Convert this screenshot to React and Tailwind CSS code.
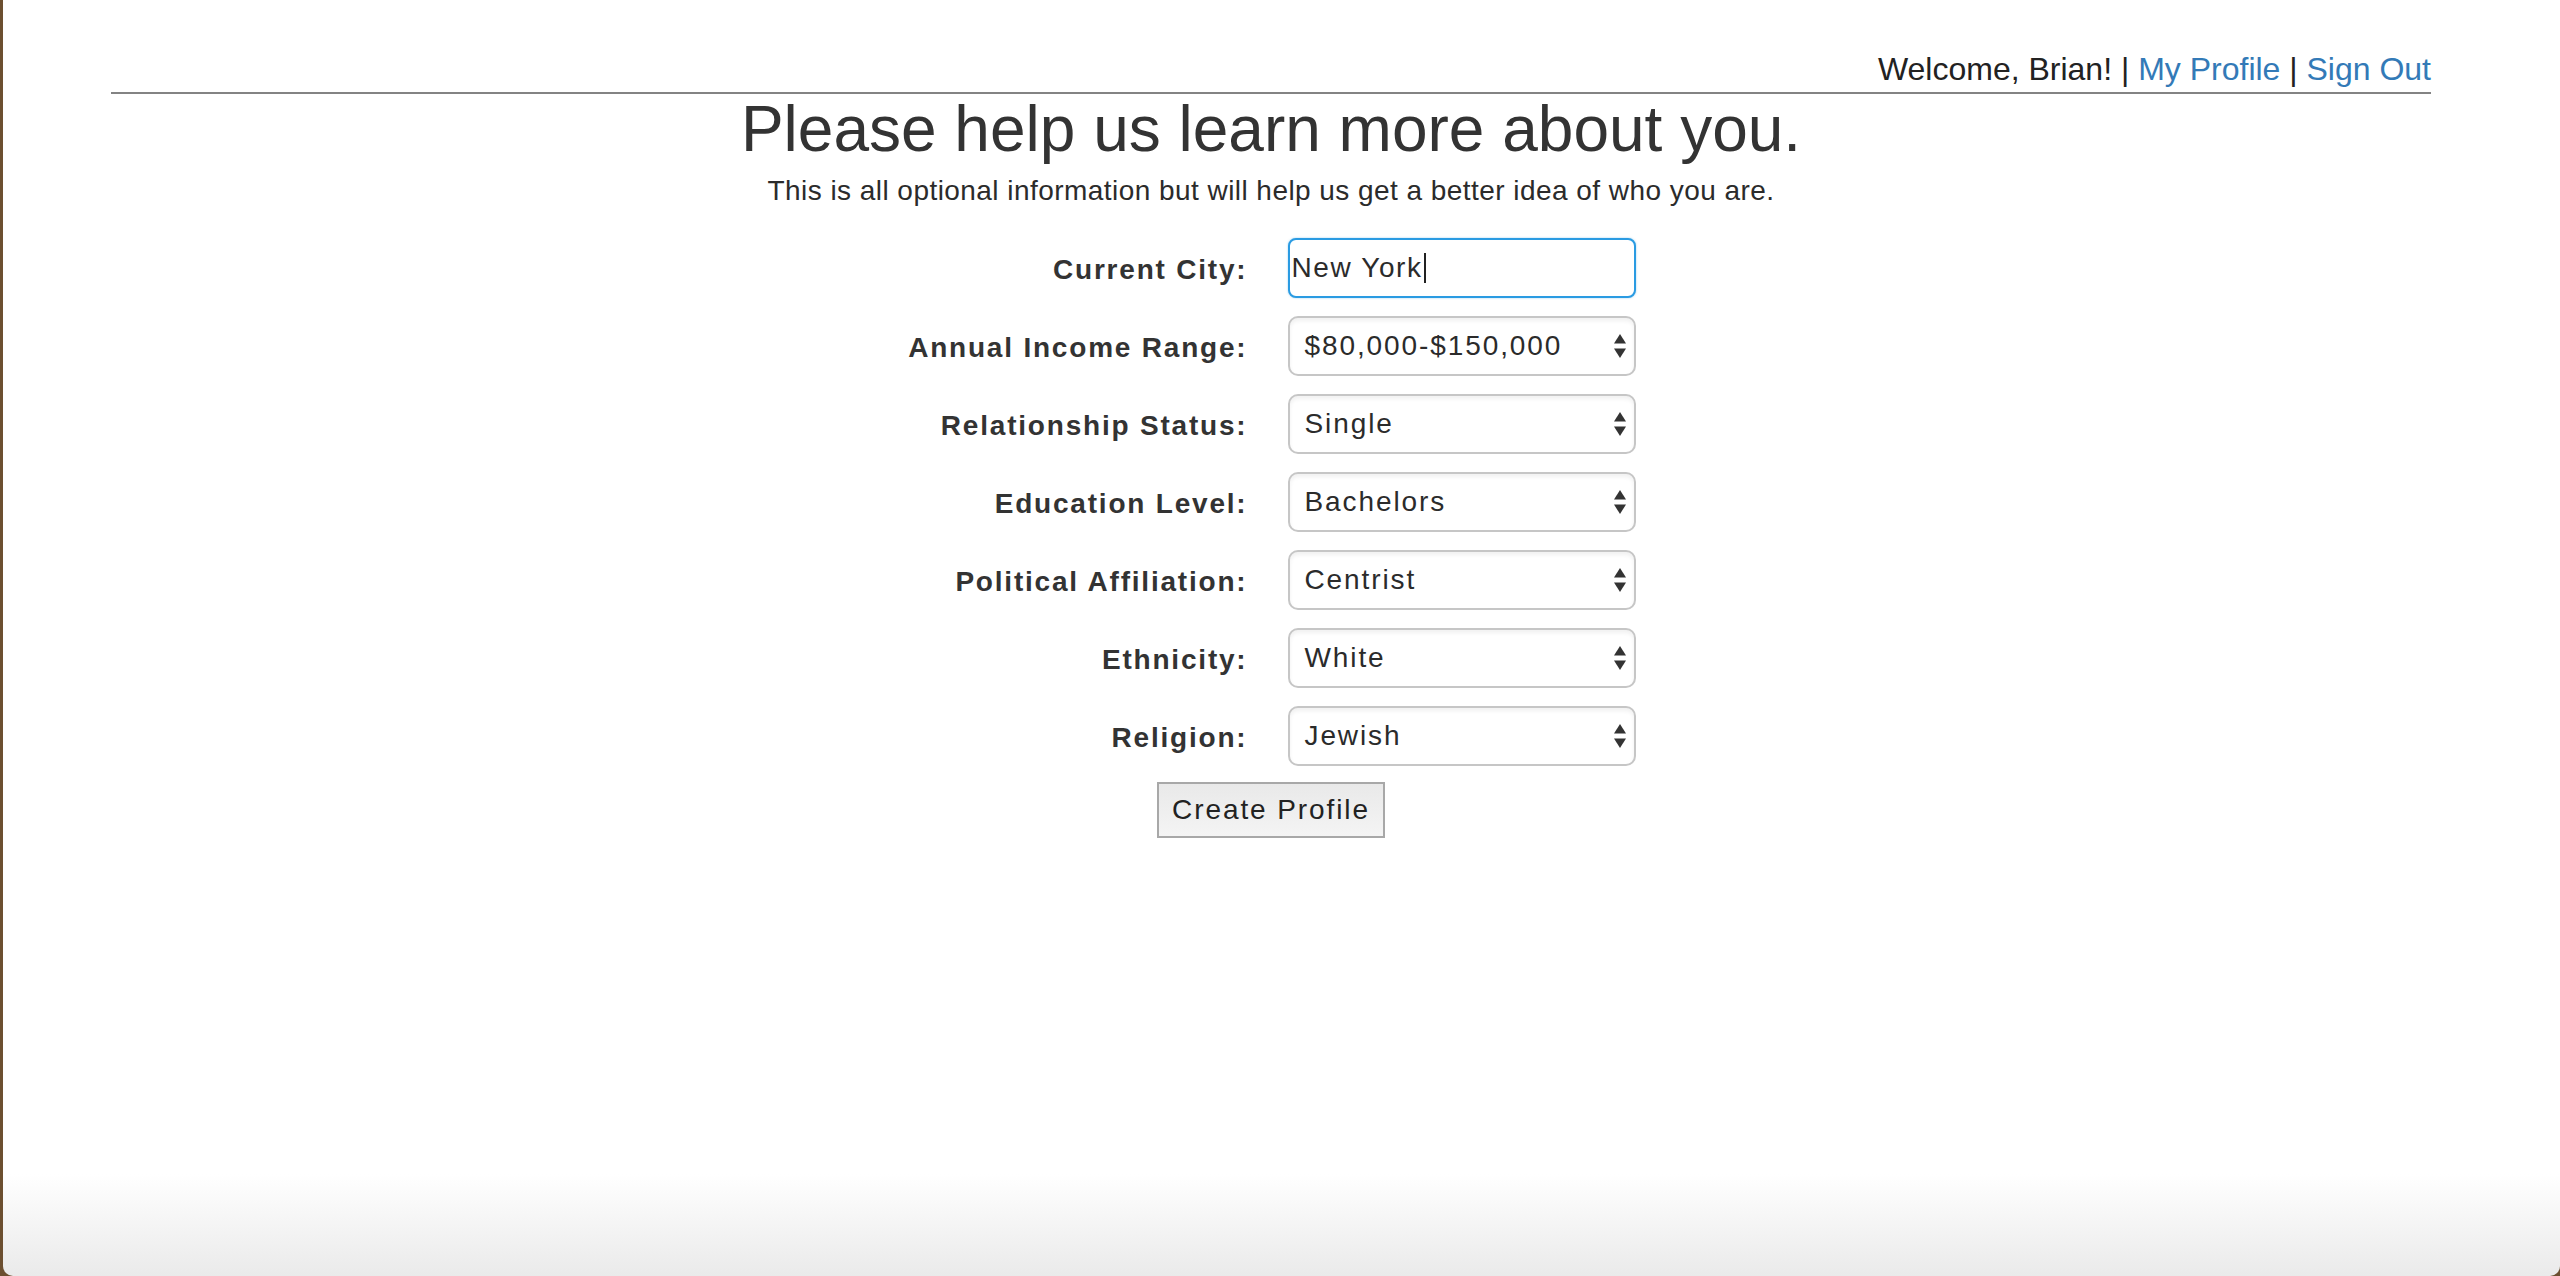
import React from "react";

const font = { fontFamily: '"Liberation Sans", Arial, Helvetica, sans-serif' };

function Arrows() {
  return (
    <svg width="12" height="24" viewBox="0 0 12 24" className="shrink-0">
      <polygon points="6,0 12,9.5 0,9.5" fill="#333" />
      <polygon points="0,14.5 12,14.5 6,24" fill="#333" />
    </svg>
  );
}

function SelectBox({ value }) {
  return (
    <div className="h-[60px] w-[348px] rounded-[10px] border-2 border-[#c6c6c6] bg-white shadow-[inset_0_3px_4px_rgba(0,0,0,0.06)] flex items-center justify-between pl-[15px] pr-[8px]">
      <span className="text-[28px] tracking-[1.9px] text-[#2b2b2b] leading-none">{value}</span>
      <Arrows />
    </div>
  );
}

const rows = [
  ["Annual Income Range:", "$80,000-$150,000"],
  ["Relationship Status:", "Single"],
  ["Education Level:", "Bachelors"],
  ["Political Affiliation:", "Centrist"],
  ["Ethnicity:", "White"],
  ["Religion:", "Jewish"],
];

function Label({ children }) {
  return (
    <div className="text-right text-[28px] font-bold tracking-[1.8px] text-[#333] pt-[4px] leading-[32px]">
      {children}
    </div>
  );
}

export default function App() {
  return (
    <div style={font} className="w-[2560px] h-[1276px] bg-[#6c4f30] flex overflow-hidden">
      <div className="ml-[3px] flex-1 h-full rounded-b-[10px] bg-[linear-gradient(180deg,#ffffff_92%,#eaeaea_100%)] flex flex-col">
        <div className="ml-[108px] w-[2320px] flex flex-col">
          <div className="flex justify-end pt-[51px] pb-[5px] border-b-2 border-[#838383] text-[32px] leading-[36px] text-[#222]">
            <span>
              Welcome, Brian! |{" "}
              <a className="text-[#337ab7]">My Profile</a> |{" "}
              <a className="text-[#337ab7]">Sign Out</a>
            </span>
          </div>
          <h1 className="mt-[2px] text-center text-[64px] leading-[66px] text-[#333]">
            Please help us learn more about you.
          </h1>
          <p className="mt-[9px] text-center text-[28px] leading-[40px] tracking-[0.45px] text-[#2b2b2b]">
            This is all optional information but will help us get a better idea of who you are.
          </p>
          <div className="mt-[27px] mx-auto grid grid-cols-[341px_348px] gap-x-[40px] gap-y-[18px] items-center">
            <Label>Current City:</Label>
            <div className="h-[60px] w-[348px] rounded-[8px] border-2 border-[#2a9be2] shadow-[0_0_2px_rgba(42,155,226,0.5)] bg-white flex items-center pl-[2px]">
              <span className="text-[28px] tracking-[1.6px] text-[#2b2b2b] leading-none">New York</span>
              <span className="ml-[1px] w-[2px] h-[30px] bg-[#222]" />
            </div>
            {rows.map(([l, v]) => (
              <React.Fragment key={l}>
                <Label>{l}</Label>
                <SelectBox value={v} />
              </React.Fragment>
            ))}
          </div>
          <div className="mt-[16px] flex justify-center">
            <button className="w-[228px] h-[56px] border-2 border-[#a8a8a8] bg-[linear-gradient(180deg,#e9e9e9,#f4f4f4)] text-[28px] tracking-[1.9px] text-[#222]">
              Create Profile
            </button>
          </div>
        </div>
      </div>
    </div>
  );
}
